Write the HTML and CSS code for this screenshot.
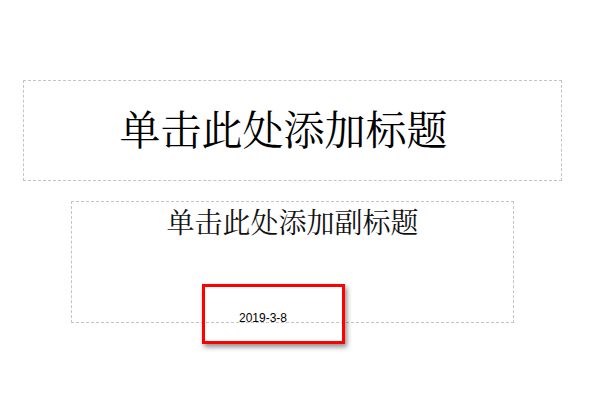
FILE: index.html
```html
<!DOCTYPE html>
<html lang="zh-CN">
<head>
    <meta charset="UTF-8">
    <title>幻灯片</title>
    <link rel="stylesheet" href="styles.css">
</head>
<body>
    <div class="slide">
        <div class="title-box">
            <h1 class="title">单击此处添加标题</h1>
        </div>
        <div class="subtitle-box">
            <h2 class="subtitle">单击此处添加副标题</h2>
            <div class="date-mark">
                <span class="date">2019-3-8</span>
            </div>
        </div>
    </div>
</body>
</html>
```

FILE: styles.css
```css
body {
    margin: 0;
    background: #fff;
    font-family: "Noto Serif CJK SC", "Liberation Serif", "Noto Sans CJK SC", serif;
}
.slide {
    width: 600px;
    height: 400px;
    padding-top: 80px;
    box-sizing: border-box;
}
.title-box {
    margin-left: 23px;
    width: 539px;
    height: 101px;
    border: 1px dashed #c4c4c4;
    box-sizing: border-box;
    display: flex;
    align-items: center;
    justify-content: center;
    padding-right: 18px;
    padding-bottom: 6px;
}
.title {
    margin: 0;
    font-size: 41px;
    font-weight: normal;
    color: #000;
    line-height: 1;
}
.subtitle-box {
    position: relative;
    margin-left: 71px;
    margin-top: 20px;
    width: 443px;
    height: 122px;
    border: 1px dashed #c4c4c4;
    box-sizing: border-box;
    padding-top: 5px;
}
.subtitle {
    margin: 0;
    text-align: center;
    font-size: 28px;
    font-weight: normal;
    color: #111;
    line-height: 1;
}
/* red highlight drawn over the slide */
.date-mark {
    position: absolute;
    left: 130px;
    top: 82px;
    width: 143px;
    height: 60px;
    border: 3px solid #f00;
    box-sizing: border-box;
    box-shadow: 2px 3px 5px rgba(0, 0, 0, 0.45);
}
.date {
    position: absolute;
    left: 34px;
    top: 24px;
    font-family: "Liberation Sans", Arial, sans-serif;
    font-size: 12px;
    color: #000;
}
```
